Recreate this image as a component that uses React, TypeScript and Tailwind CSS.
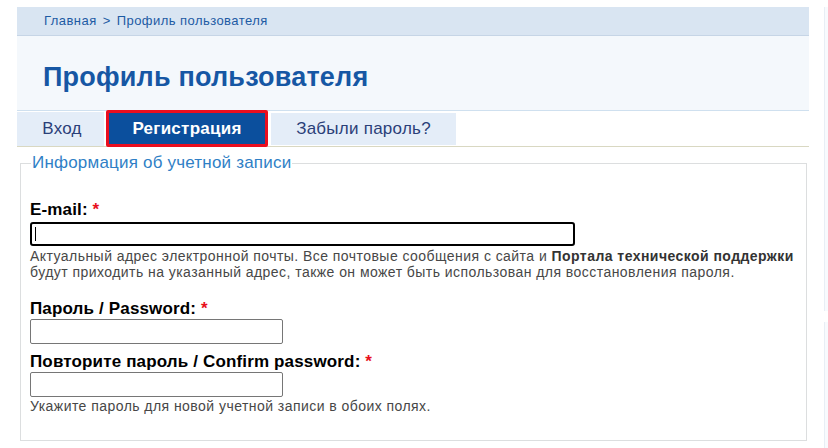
const font = "font-['Liberation_Sans',Arial,sans-serif]";

const Breadcrumb = () => (
  <div className="h-[29px] bg-[#d9e5f2] border-b border-[#c6d5e6] pl-[27px] flex items-center text-[13px] tracking-[0.45px] text-[#1d5ba4]">
    <span>Главная</span>
    <span className="mx-[6px]">&gt;</span>
    <span>Профиль пользователя</span>
  </div>
);

const Header = () => (
  <div className="h-[75px] bg-[#f4f8fc] border-b border-[#cfe0ef] pl-[26px] pt-[26px]">
    <h1 className="text-[27px] leading-[30px] tracking-[0.2px] font-bold text-[#1657a4]">Профиль пользователя</h1>
  </div>
);

const Tabs = () => (
  <div className="h-[36px] border-b border-[#d9d8c2] flex items-start text-[17px] tracking-[0.25px]">
    <a className="w-[87px] h-[34px] mt-px pl-[3px] bg-[#e4edf8] text-[#2b3f78] flex items-center justify-center">Вход</a>
    <a className="ml-[2px] w-[162px] h-[37px] -mt-px bg-[#0b4f9d] border-[3px] border-[#ea0e1f] rounded-[2px] text-white font-bold flex items-center justify-center">
      Регистрация
    </a>
    <a className="ml-[3px] w-[185px] h-[32px] mt-[2px] bg-[#e4edf8] text-[#2b3f78] flex items-center justify-center">
      Забыли пароль?
    </a>
  </div>
);

const Req = () => <span className="text-[#e8101c] font-bold"> *</span>;

const labelCls = "block text-[17px] leading-[18px] tracking-[0.15px] font-bold text-black";
const helpCls = "text-[14px] leading-[16px] tracking-[0.45px] text-[#474747]";

export default function App() {
  return (
    <div className={`${font} w-[828px] h-[448px] bg-white overflow-hidden flex`}>
      <div className="ml-[17px] w-[792px] pt-[7px] shrink-0">
        <Breadcrumb />
        <Header />
        <Tabs />

        <fieldset className="ml-[3px] w-[787px] h-[287px] mt-[7px] border border-[#dcdedf] pl-[9px]">
          <legend className="ml-[1px] px-[1px] text-[17px] leading-[18px] tracking-[0.2px] text-[#2f7fc6]">
            Информация об учетной записи
          </legend>

          <label className={`${labelCls} mt-[29px]`}>
            E-mail:
            <Req />
          </label>
          <div className="relative mt-[3px] w-[545px] h-[24px]">
            <input
              type="text"
              className="w-full h-full border-2 border-black rounded-[3px] bg-white outline-none"
            />
            <span className="absolute left-[5px] top-[5px] w-px h-[14px] bg-black" />
          </div>
          <p className={`${helpCls} mt-[2px] whitespace-nowrap`}>
            Актуальный адрес электронной почты. Все почтовые сообщения с сайта и{" "}
            <b className="text-[#333]">Портала технической поддержки</b>
            <br />
            будут приходить на указанный адрес, также он может быть использован для восстановления пароля.
          </p>

          <label className={`${labelCls} mt-[20px]`}>
            Пароль / Password:
            <Req />
          </label>
          <input
            type="password"
            className="block mt-px w-[253px] h-[25px] border border-[#767676] rounded-[2px] bg-white"
          />

          <label className={`${labelCls} mt-[9px]`}>
            Повторите пароль / Confirm password:
            <Req />
          </label>
          <input
            type="password"
            className="block mt-px w-[253px] h-[25px] border border-[#767676] rounded-[2px] bg-white"
          />
          <p className={`${helpCls} mt-px`}>Укажите пароль для новой учетной записи в обоих полях.</p>
        </fieldset>
      </div>

      <div className="ml-[15px] w-[20px] shrink-0 pt-[7px] flex flex-col gap-[11px]">
        <div className="h-[304px] bg-[#f8fafd] border-l border-[#e8eef5]" />
        <div className="flex-1 bg-[#f8fafd] border-l border-[#e8eef5]" />
      </div>
    </div>
  );
}
